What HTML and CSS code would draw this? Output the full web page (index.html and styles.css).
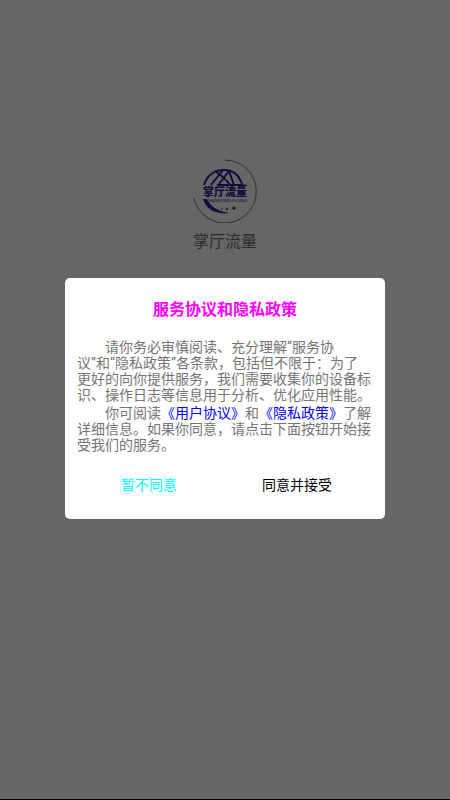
FILE: index.html
```
<!DOCTYPE html>
<html lang="zh-CN">
  <head>
    <meta charset="UTF-8">
    <meta name="viewport" content="width=device-width, initial-scale=1">
    <title>掌厅流量</title>
    <link rel="stylesheet" href="styles.css">
  </head>
  <body>
    <main class="splash">
      <svg class="logo" viewBox="0 0 64 64" role="img" aria-label="掌厅流量">
        <path class="logo-ring" d="M32 1 A31.500 31.500 0 1 1 1 39"/>
        <g class="logo-globe">
          <path d="M11 26 C14 17 21 11 31 11 C40 11 46 16 49 25"/>
          <path d="M18 26 L30 11"/>
          <path d="M22 12 C28 16 33 20 37 26"/>
          <path d="M26 25 L36 12 L41 26"/>
        </g>
        <path class="logo-fill" d="M10 40 H14 C17 47 24 52 36 54 C23 56 13 50 10 40 Z"/>
        <path class="logo-fill" d="M24 25 H48 L54 26 V27 H24 Z"/>
        <text class="logo-name" x="32" y="37" text-anchor="middle">掌厅流量</text>
        <text class="logo-pinyin" x="34" y="43" text-anchor="middle">ZHANGTINGLIULIANG</text>
        <circle class="logo-fill" cx="29" cy="50" r="0.800"/>
        <circle class="logo-fill" cx="34" cy="50" r="1"/>
        <circle class="logo-fill" cx="41" cy="49" r="1.600"/>
      </svg>
      <h1 class="app-name">掌厅流量</h1>
    </main>

    <div class="mask">
      <section class="dialog" role="dialog" aria-modal="true" aria-labelledby="dialog-title">
        <h2 class="dialog-title" id="dialog-title">服务协议和隐私政策</h2>
        <div class="dialog-text">
          <p>请你务必审慎阅读、充分理解“服务协<br>议”和“隐私政策”各条款，包括但不限于：为了<br>更好的向你提供服务，我们需要收集你的设备标<br>识、操作日志等信息用于分析、优化应用性能。</p>
          <p>你可阅读<a href="#user">《用户协议》</a>和<a href="#privacy">《隐私政策》</a>了解<br>详细信息。如果你同意，请点击下面按钮开始接<br>受我们的服务。</p>
        </div>
        <div class="actions">
          <button type="button" class="btn btn-refuse">暂不同意</button>
          <button type="button" class="btn btn-agree">同意并接受</button>
        </div>
      </section>
    </div>
  </body>
</html>
```

FILE: styles.css
```
*{
    box-sizing: border-box;
}
body{
    margin:0;
    background:#fff;
    font-family: Roboto, "Noto Sans CJK SC", sans-serif;
}
h1,h2,p{
    margin:0;
}
.splash{
    display:flex;
    flex-direction:column;
    align-items:center;
    min-height:100vh;
    padding-top:159px;
    border-bottom:1px solid #000;
}
.logo{
    width:64px;
    height:64px;
}
.logo-ring{
    fill:none;
    stroke:#777;
    stroke-width:1;
}
.logo-globe{
    fill:none;
    stroke:#2d1e96;
    stroke-width:2;
}
.logo-fill{
    fill:#2d1e96;
}
.logo-name{
    fill:#2d1e96;
    font-size:11px;
    font-weight:900;
}
.logo-pinyin{
    fill:#2d1e96;
    font-size:4px;
}
.app-name{
    margin-top:7px;
    color:#707070;
    font-size:16px;
    font-weight:400;
    line-height:24px;
}
.mask{
    position:fixed;
    top:0;
    right:0;
    bottom:0;
    left:0;
    display:flex;
    align-items:center;
    justify-content:center;
    padding:0 16px 4px;
    background:rgba(0,0,0,.6);
}
.dialog{
    width:100%;
    max-width:320px;
    padding-top:20px;
    padding-bottom:15px;
    border-radius:5px;
    background:#fff;
}
.dialog-title{
    color:#f0f;
    font-size:16px;
    font-weight:700;
    line-height:24px;
    text-align:center;
}
.dialog-text{
    padding:17px 12px 0;
    color:#757575;
    font-size:14px;
    line-height:16px;
}
.dialog-text p{
    text-indent:2em;
}
.dialog-text p + p{
    margin-top:2px;
}
.dialog-text a{
    color:#00f;
    text-decoration:none;
}
.actions{
    display:flex;
    margin-top:11px;
    padding:0 14px 0 10px;
}
.btn{
    flex:1;
    height:40px;
    padding:0;
    border:0;
    background:none;
    font-family:inherit;
    font-size:14px;
}
.btn-refuse{
    color:#0ff;
}
.btn-agree{
    color:#000;
}
```
